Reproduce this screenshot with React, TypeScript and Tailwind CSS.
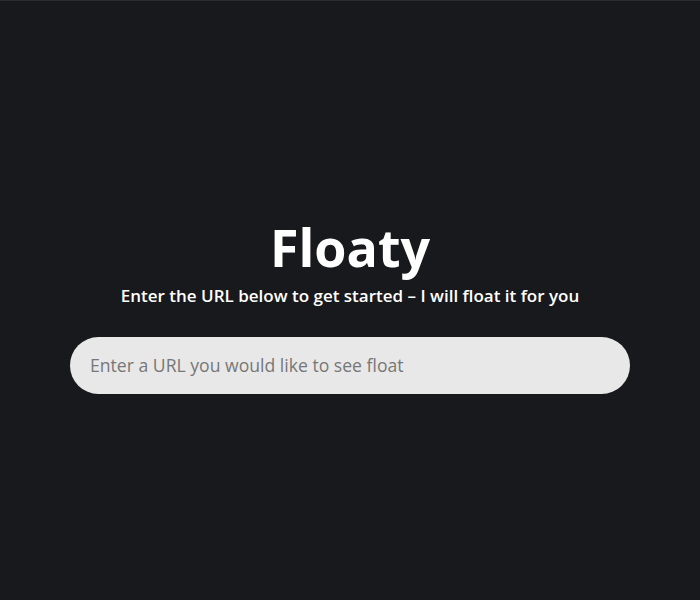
export default function App() {
  return (
    <div
      className="flex h-[600px] w-full flex-col items-center justify-center border-t border-[#2a2b2f] bg-[#18191d] px-[70px] pt-[8px]"
      style={{ fontFamily: '"Open Sans", "Noto Sans", sans-serif' }}
    >
      <h1 className="text-[52px] font-bold leading-[62px] text-white">Floaty</h1>
      <p className="mt-[6px] text-[17px] font-semibold leading-[23px] text-white">
        Enter the URL below to get started – I will float it for you
      </p>
      <input
        className="mt-[30px] h-[57px] w-full rounded-full bg-[#e8e8e8] px-5 text-[17.6px] text-[#333] outline-none placeholder:text-[#777]"
        placeholder="Enter a URL you would like to see float"
      />
    </div>
  );
}
